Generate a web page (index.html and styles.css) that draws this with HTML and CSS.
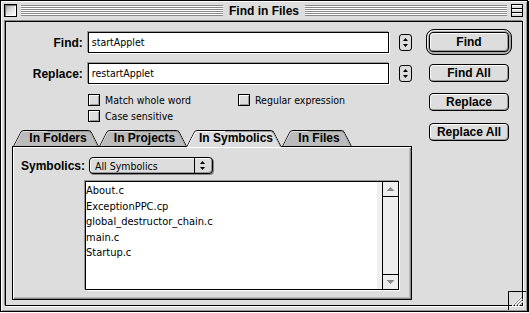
FILE: index.html
```html
<!DOCTYPE html>
<html lang="en">
<head>
    <meta charset="UTF-8">
    <title>Find in Files</title>
    <link rel="stylesheet" href="styles.css">
</head>
<body>
    <div class="window">
        <div class="titlebar">
            <div class="closebox"></div>
            <div class="stripes"></div>
            <div class="title">Find in Files</div>
            <div class="stripes"></div>
            <svg class="collapsebox" width="12" height="13" viewBox="0 0 12 13">
                <rect x="0.5" y="0.5" width="11" height="12" fill="#ddd" stroke="#000"/>
                <line x1="1" y1="4.5" x2="11" y2="4.5" stroke="#000"/>
                <line x1="1" y1="8.5" x2="11" y2="8.5" stroke="#000"/>
                <line x1="1" y1="1.5" x2="11" y2="1.5" stroke="#fff"/>
                <line x1="1" y1="5.5" x2="11" y2="5.5" stroke="#fff"/>
                <line x1="1" y1="9.5" x2="11" y2="9.5" stroke="#fff"/>
            </svg>
        </div>

        <div class="content">
            <div class="main">
                <div class="field-row">
                    <div class="label">Find:</div>
                    <div class="field">startApplet</div>
                    <svg class="stepper" width="13" height="17" viewBox="0 0 13 17">
                        <rect x="0.5" y="0.5" width="12" height="16" rx="2.5" fill="#ddd" stroke="#000"/>
                        <polygon points="4,7 6.5,4 9,7" fill="#000"/>
                        <polygon points="4,10 6.5,13 9,10" fill="#000"/>
                    </svg>
                </div>
                <div class="field-row second">
                    <div class="label">Replace:</div>
                    <div class="field">restartApplet</div>
                    <svg class="stepper" width="13" height="17" viewBox="0 0 13 17">
                        <rect x="0.5" y="0.5" width="12" height="16" rx="2.5" fill="#ddd" stroke="#000"/>
                        <polygon points="4,7 6.5,4 9,7" fill="#000"/>
                        <polygon points="4,10 6.5,13 9,10" fill="#000"/>
                    </svg>
                </div>

                <div class="checks">
                    <div class="check"><span class="box"></span>Match whole word</div>
                    <div class="check"><span class="box"></span>Regular expression</div>
                    <div class="check"><span class="box"></span>Case sensitive</div>
                </div>

                <div class="tabs">
                    <div class="tab t-folders">In Folders</div>
                    <div class="tab t-projects">In Projects</div>
                    <div class="tab t-symbolics selected">In Symbolics</div>
                    <div class="tab t-files">In Files</div>
                </div>
                <div class="panel">
                    <div class="popup-row">
                        <div class="label-inline">Symbolics:</div>
                        <div class="popup">
                            <span class="popup-text">All Symbolics</span>
                            <svg class="popup-arrows" width="18" height="15" viewBox="0 0 18 15">
                                <line x1="0.5" y1="0" x2="0.5" y2="15" stroke="#000"/>
                                <polygon points="6,6 8.5,3 11,6" fill="#000"/>
                                <polygon points="6,9 8.5,12 11,9" fill="#000"/>
                            </svg>
                        </div>
                    </div>
                    <div class="list">
                        <div class="items">
                            <div class="item">About.c</div>
                            <div class="item">ExceptionPPC.cp</div>
                            <div class="item">global_destructor_chain.c</div>
                            <div class="item">main.c</div>
                            <div class="item">Startup.c</div>
                        </div>
                        <div class="scrollbar">
                            <div class="arrow up">
                                <svg width="15" height="14" viewBox="0 0 15 14"><polygon points="3.5,9 7.5,5 11.5,9" fill="#888"/></svg>
                            </div>
                            <div class="track"></div>
                            <div class="arrow down">
                                <svg width="15" height="14" viewBox="0 0 15 14"><polygon points="3.5,5 7.5,9 11.5,5" fill="#888"/></svg>
                            </div>
                        </div>
                    </div>
                </div>
            </div>

            <div class="buttons">
                <div class="default-ring">
                    <div class="btn big">Find</div>
                </div>
                <div class="btn find-all">Find All</div>
                <div class="btn replace">Replace</div>
                <div class="btn replace-all">Replace All</div>
            </div>
        </div>

        <svg class="growbox" width="18" height="19" viewBox="0 0 18 19">
            <path d="M0.5 19 V0.5 H18" fill="none" stroke="#000"/>
            <line x1="4" y1="15" x2="13" y2="6" stroke="#fff"/>
            <line x1="5" y1="15" x2="14" y2="6" stroke="#888"/>
            <line x1="7" y1="15" x2="14" y2="8" stroke="#fff"/>
            <line x1="8" y1="15" x2="15" y2="8" stroke="#888"/>
            <line x1="10" y1="15" x2="15" y2="10" stroke="#fff"/>
            <line x1="11" y1="15" x2="15" y2="11" stroke="#888"/>
        </svg>
    </div>
</body>
</html>
```

FILE: styles.css
```css
* {
    margin: 0;
    padding: 0;
    box-sizing: border-box;
}

body {
    margin: 0;
    background: #fff;
    font-family: "DejaVu Sans Condensed", "DejaVu Sans", sans-serif;
    font-size: 10.5px;
    color: #000;
}

.window {
    position: relative;
    width: 528px;
    height: 312px;
    border: 1px solid #000;
    background: #ddd;
    box-shadow: 1px 1px 0 #000, inset 1px 1px 0 #fff, inset -1px -1px 0 #999;
    display: flex;
    flex-direction: column;
}

/* title bar */
.titlebar {
    height: 19px;
    display: flex;
    align-items: center;
    gap: 4px;
    padding: 0 4px 0 3px;
}

.closebox {
    width: 13px;
    height: 13px;
    border: 1px solid #000;
    background: linear-gradient(135deg, #999 0%, #ddd 45%, #fff 100%);
    box-shadow: inset 1px 1px 0 #777, inset -1px -1px 0 #fff;
}

.stripes {
    flex: 1;
    height: 11px;
    background: repeating-linear-gradient(to bottom, #888 0 1px, #fff 1px 2px);
}

.title {
    font: bold 12px "Liberation Sans", Arial, sans-serif;
    padding: 0 2px;
}

.collapsebox {
    display: block;
}

/* content */
.content {
    flex: 1;
    margin: 1px 4px 5px 4px;
    border: 1px solid #000;
    box-shadow: -1px -1px 0 #888, 1px 1px 0 #fff;
    display: flex;
    gap: 14px;
    padding-left: 6px;
}

.main {
    width: 400px;
    padding-top: 10px;
}

.field-row {
    display: flex;
    align-items: center;
    height: 21px;
}

.field-row.second {
    margin-top: 10px;
}

.label {
    width: 71px;
    margin-right: 5px;
    text-align: right;
    font: bold 12px "Liberation Sans", Arial, sans-serif;
}

.field {
    width: 302px;
    height: 21px;
    border: 1px solid #000;
    background: #fff;
    box-shadow: -1px -1px 0 #999, 1px 1px 0 #fff;
    padding-left: 3px;
    line-height: 19px;
}

.stepper {
    display: block;
    margin-left: 10px;
}

.checks {
    display: grid;
    grid-template-columns: 150px auto;
    row-gap: 4px;
    margin-top: 10px;
    padding-left: 76px;
}

.check {
    display: flex;
    align-items: center;
    gap: 5px;
    height: 12px;
}

.box {
    width: 12px;
    height: 12px;
    border: 1px solid #000;
    background: #ddd;
    box-shadow: inset 1px 1px 0 #fff, inset -1px -1px 0 #999;
}

/* tabs */
.tabs {
    display: flex;
    height: 16px;
    margin-top: 8px;
    padding-left: 1px;
    position: relative;
    z-index: 1;
}

.tab {
    position: relative;
    z-index: 0;
    height: 16px;
    display: flex;
    align-items: center;
    justify-content: center;
    padding-left: 4px;
    font: bold 12px "Liberation Sans", Arial, sans-serif;
}

.tab::before,
.tab::after {
    content: '';
    position: absolute;
    top: 0;
    bottom: 0;
    width: 50%;
    background: #bbb;
    border-top: 1px solid #000;
    z-index: -1;
}

.tab::before {
    left: 0;
    border-left: 1px solid #000;
    border-top-left-radius: 3px;
    box-shadow: inset 1px 1px 0 #ddd;
    transform: skewX(-27deg);
    transform-origin: bottom left;
}

.tab::after {
    right: 0;
    border-right: 1px solid #000;
    border-top-right-radius: 3px;
    box-shadow: inset -1px 1px 0 #999;
    transform: skewX(27deg);
    transform-origin: bottom right;
}

.tab.selected::before,
.tab.selected::after {
    background: #ddd;
    bottom: -1px;
}

.tab.selected::before {
    box-shadow: inset 1px 1px 0 #fff;
}

.t-folders { width: 86px; }
.t-projects { width: 87px; }
.t-symbolics { width: 96px; }
.t-files { width: 70px; }

.panel {
    height: 154px;
    border: 1px solid #000;
    background: #ddd;
    box-shadow: inset 1px 1px 0 #fff, inset -1px -1px 0 #888, inset -2px -2px 0 #bbb;
    padding: 10px 0 0 8px;
}

.popup-row {
    display: flex;
    align-items: center;
    gap: 4px;
}

.label-inline {
    font: bold 12px "Liberation Sans", Arial, sans-serif;
}

.popup {
    width: 124px;
    height: 17px;
    border: 1px solid #000;
    border-radius: 4px;
    background: #ddd;
    box-shadow: inset 1px 1px 0 #fff, inset -1px -1px 0 #999, 1px 1px 0 #888;
    display: flex;
    align-items: center;
    justify-content: space-between;
    padding-left: 5px;
}

.popup-arrows {
    display: block;
}

.list {
    display: flex;
    width: 314px;
    height: 109px;
    margin: 7px 0 0 64px;
    border: 1px solid #000;
    background: #fff;
    box-shadow: 1px 1px 0 #fff, -1px -1px 0 #999;
}

.items {
    flex: 1;
    font-size: 11px;
    line-height: 15.5px;
    padding-top: 1px;
    box-shadow: inset -5px 0 0 #f0f0f0;
}

.scrollbar {
    width: 16px;
    border-left: 1px solid #000;
    background: #eee;
    display: flex;
    flex-direction: column;
}

.arrow {
    height: 15px;
    display: flex;
    align-items: center;
    justify-content: center;
}

.arrow.up {
    border-bottom: 1px solid #000;
}

.arrow.down {
    border-top: 1px solid #000;
}

.track {
    flex: 1;
}

/* buttons */
.buttons {
    width: 86px;
    padding-top: 7px;
    display: flex;
    flex-direction: column;
    align-items: center;
}

.default-ring {
    width: 86px;
    height: 26px;
    border: 1px solid #000;
    border-radius: 8px;
    padding: 2px;
    background: #aaa;
    box-shadow: inset 1px 1px 0 #eee;
}

.btn {
    width: 80px;
    height: 18px;
    border: 1px solid #000;
    border-radius: 4px;
    background: #ddd;
    box-shadow: inset 1px 1px 0 #fff, inset -1px -1px 0 #999;
    display: flex;
    align-items: center;
    justify-content: center;
    font: bold 12px "Liberation Sans", Arial, sans-serif;
}

.btn.big {
    height: 20px;
}

.find-all {
    margin-top: 9px;
}

.replace {
    margin-top: 11px;
}

.replace-all {
    margin-top: 12px;
}

.growbox {
    position: absolute;
    right: 1px;
    bottom: 1px;
    display: block;
}
```
